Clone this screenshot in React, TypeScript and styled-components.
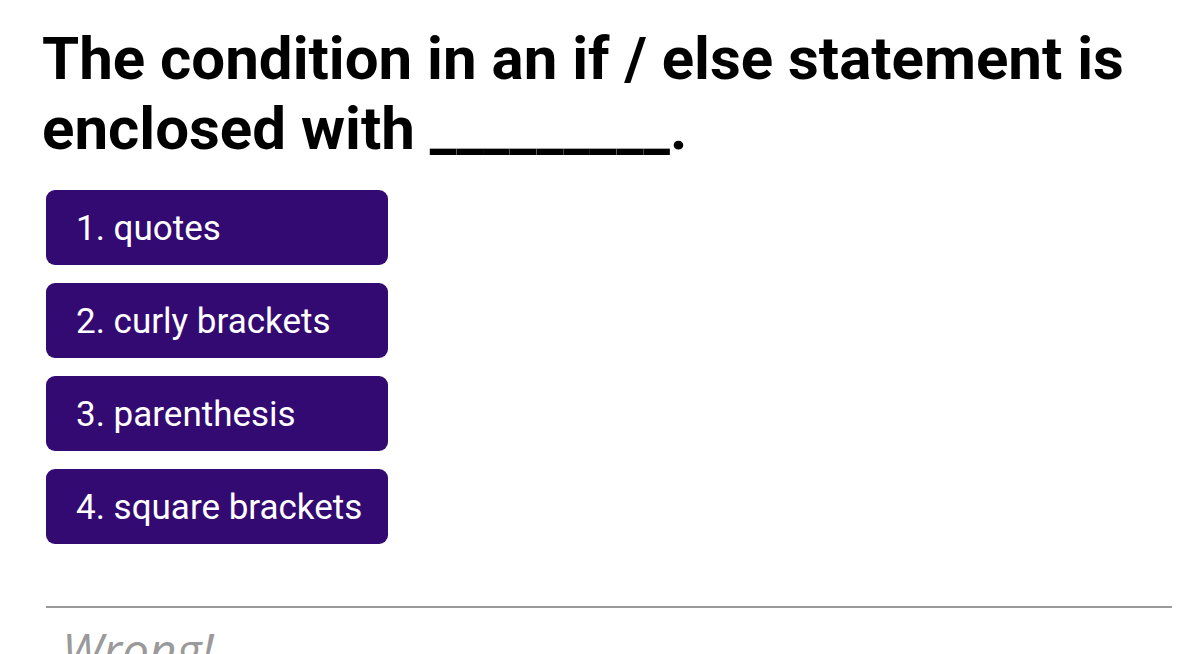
import React, { FC } from "react";
import styled, { createGlobalStyle } from "styled-components";

const GlobalStyle = createGlobalStyle`
  html, body {
    margin: 0;
    padding: 0;
    background: #ffffff;
    overflow: hidden;
  }
`;

const Page = styled.div`
  display: flex;
  flex-direction: column;
  padding: 24px 16px 0 42px;
  height: 654px;
  box-sizing: border-box;
  font-family: Roboto, "Liberation Sans", sans-serif;
`;

const Question = styled.h1`
  margin: 0;
  font-size: 60px;
  line-height: 70px;
  font-weight: 700;
  color: #000000;
  flex-shrink: 0;
`;

const Options = styled.div`
  display: flex;
  flex-direction: column;
  gap: 18px;
  margin: 26px 0 0 4px;
  flex-shrink: 0;
`;

const Option = styled.button`
  display: flex;
  align-items: center;
  width: 342px;
  height: 75px;
  padding: 2px 0 0 30px;
  box-sizing: border-box;
  border: none;
  border-radius: 9px;
  background: #330a72;
  color: #ffffff;
  font-family: Roboto, "Liberation Sans", sans-serif;
  font-size: 35px;
  font-weight: 400;
  text-align: left;
  cursor: pointer;
`;

const Divider = styled.hr`
  flex-shrink: 0;
  margin: 62px 0 0 4px;
  border: none;
  height: 2px;
  background: #9a9a9a;
`;

const Verdict = styled.div`
  flex-shrink: 0;
  margin: 18px 0 0 20px;
  font-family: "Open Sans", sans-serif;
  font-style: italic;
  font-size: 48px;
  color: #9a9a9a;
  line-height: 1;
`;

const answers = ["quotes", "curly brackets", "parenthesis", "square brackets"];

const App: FC = () => {
  return (
    <>
      <GlobalStyle />
      <Page>
        <Question>
          The condition in an if / else statement is enclosed with _________.
        </Question>
        <Options>
          {answers.map((a, i) => (
            <Option key={a}>
              {i + 1}. {a}
            </Option>
          ))}
        </Options>
        <Divider />
        <Verdict>Wrong!</Verdict>
      </Page>
    </>
  );
};

export default App;
